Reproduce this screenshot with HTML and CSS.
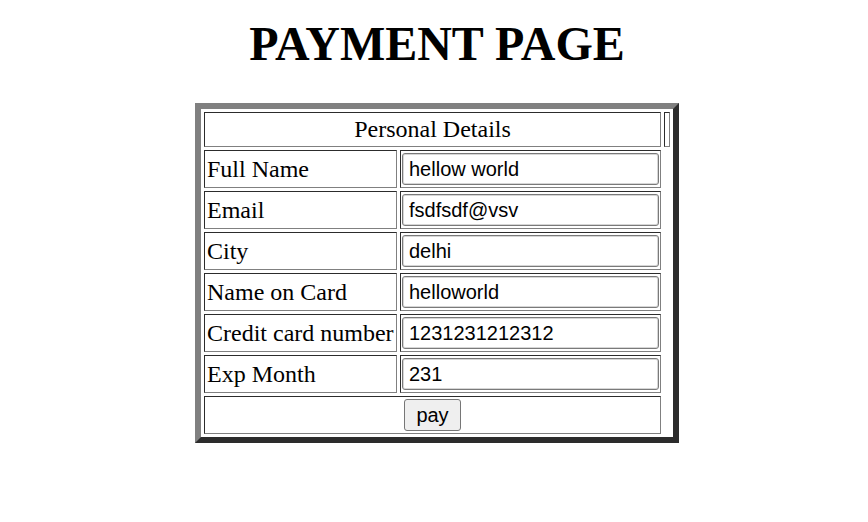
FILE: index.html
```html
<!DOCTYPE html>
<html lang="en">
<head>
<meta charset="utf-8">
<title>Payment Page</title>
<link rel="stylesheet" href="styles.css">
</head>
<body>
<h1 class="title">PAYMENT PAGE</h1>
<form class="payment">
  <div class="cell head">Personal Details</div>
  <div class="cell stub"></div>

  <label class="cell label" for="fname">Full Name</label>
  <div class="cell field"><input id="fname" class="input" type="text" value="hellow world"></div>

  <label class="cell label" for="email">Email</label>
  <div class="cell field"><input id="email" class="input" type="text" value="fsdfsdf@vsv"></div>

  <label class="cell label" for="city">City</label>
  <div class="cell field"><input id="city" class="input" type="text" value="delhi"></div>

  <label class="cell label" for="cname">Name on Card</label>
  <div class="cell field"><input id="cname" class="input" type="text" value="helloworld"></div>

  <label class="cell label" for="ccnum">Credit card number</label>
  <div class="cell field"><input id="ccnum" class="input" type="text" value="1231231212312"></div>

  <label class="cell label" for="expm">Exp Month</label>
  <div class="cell field"><input id="expm" class="input" type="text" value="231"></div>

  <div class="cell action"><button class="pay" type="button">pay</button></div>
</form>
</body>
</html>
```

FILE: styles.css
```css
html, body {
  background: #ffffff;
}

body {
  margin: 0 8px 8px 14px;
  font-family: "Liberation Serif", "Times New Roman", serif;
  color: #000000;
}

.title {
  margin: 0 0 32px;
  padding-top: 16px;
  font-size: 48px;
  line-height: 55px;
  font-weight: bold;
  text-align: center;
}

.payment {
  display: grid;
  grid-template-columns: 193px 261px 6px;
  grid-template-rows: 35px repeat(7, 38px);
  gap: 3px;
  padding: 3px;
  width: max-content;
  margin: 0 auto;
  border: 6px solid;
  border-color: #808080 #2c2c2c #2c2c2c #808080;
}

.cell {
  box-sizing: border-box;
  border: 1px solid;
  border-color: #2c2c2c #808080 #808080 #2c2c2c;
  font-size: 24px;
  display: flex;
  align-items: center;
  min-width: 0;
}

.head {
  grid-column: 1 / span 2;
  justify-content: center;
}

.stub {
  grid-column: 3;
}

.label {
  grid-column: 1;
  padding: 0 2px;
  white-space: nowrap;
}

.field {
  grid-column: 2;
  padding: 0 1px;
}

.input {
  box-sizing: border-box;
  width: 257px;
  height: 32px;
  margin: 0;
  padding: 1px 6px;
  border: 1px solid #7a7a7a;
  border-radius: 3px;
  box-shadow: inset 0 0 0 1px #d6d6d6;
  background: #ffffff;
  font-family: "Liberation Sans", Arial, sans-serif;
  font-size: 20px;
  color: #000000;
}

.action {
  grid-column: 1 / span 2;
  justify-content: center;
}

.pay {
  box-sizing: border-box;
  width: 57px;
  height: 32px;
  margin: 0;
  padding: 0;
  border: 1px solid #767676;
  border-radius: 3px;
  background: #efefef;
  font-family: "Liberation Sans", Arial, sans-serif;
  font-size: 20px;
  color: #000000;
}
```
